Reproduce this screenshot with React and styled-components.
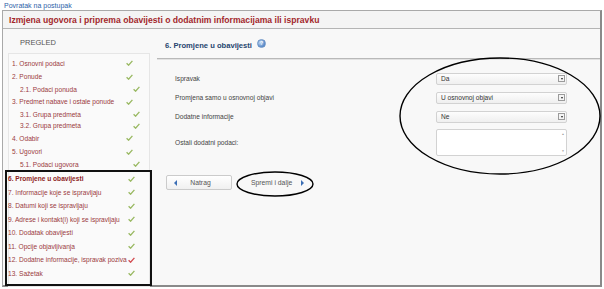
import React from "react";
import styled, { createGlobalStyle } from "styled-components";

const GlobalStyle = createGlobalStyle`
  body {
    margin: 0;
    background: #fff;
    font-family: "Liberation Sans", Arial, sans-serif;
  }
`;

const Page = styled.div`
  position: relative;
  width: 604px;
  height: 289px;
  padding: 2px 2px 0 2px;
  box-sizing: border-box;
`;

const BackLink = styled.a`
  display: block;
  height: 8px;
  padding-left: 2px;
  font-size: 7px;
  line-height: 8px;
  color: #2d5fa8;
  text-decoration: none;
`;

const Frame = styled.div`
  width: 600px;
  height: 277px;
  box-sizing: border-box;
  border: 1px solid #a9a9a9;
  border-right: 2px solid #8a8a8a;
  border-bottom: 2px solid #8a8a8a;
  background: #f8f8f8;
  display: flex;
  flex-direction: column;
`;

const TitleBar = styled.div`
  height: 17px;
  flex: none;
  border-bottom: 1px solid #b4b4b4;
  background: #f4f4f4;
  padding-left: 6px;
  display: flex;
  align-items: center;
`;

const Title = styled.h1`
  margin: 0;
  font-size: 8.6px;
  font-weight: bold;
  color: #a3282c;
`;

const Body = styled.div`
  flex: 1;
  display: flex;
`;

const Sidebar = styled.div`
  width: 154px;
  flex: none;
  padding-left: 5px;
  box-sizing: border-box;
`;

const SidebarTitle = styled.div`
  height: 24px;
  padding-left: 12px;
  font-size: 7.5px;
  color: #555;
  display: flex;
  align-items: center;
  padding-top: 3px;
  box-sizing: border-box;
`;

const NavBox = styled.div`
  width: 142px;
  border: 1px solid #e6e6e6;
  background: #fafafa;
  padding-top: 2.5px;
  box-sizing: border-box;
`;

const NavItem = styled.div`
  display: flex;
  align-items: center;
  justify-content: space-between;
  height: ${(p) => (p.$sub ? "11.5px" : "13.5px")};
  padding-left: ${(p) => (p.$sub ? "11px" : "3px")};
  padding-right: ${(p) => (p.$sub ? "9px" : "16px")};
  font-size: 6.6px;
  color: ${(p) => (p.$active ? "#8e1f24" : "#9a3a3e")};
  font-weight: ${(p) => (p.$active ? "bold" : "normal")};
`;

const Highlight = styled.div`
  margin: 0 -3px 0 -4px;
  border: 2px solid #111;
  padding-bottom: 3.5px;

  ${NavItem} {
    padding-left: 1px;
    padding-right: 15px;
  }
`;

const Main = styled.div`
  flex: 1;
  display: flex;
  flex-direction: column;
`;

const SectionHeader = styled.div`
  height: 30px;
  flex: none;
  box-sizing: border-box;
  border-bottom: 1px solid #b9b9b9;
  box-shadow: 0 1px 0 #e2e2e2;
  padding-left: 8px;
  padding-top: 4px;
  display: flex;
  align-items: center;
  gap: 5px;
`;

const SectionTitle = styled.h2`
  margin: 0;
  font-size: 7.6px;
  font-weight: bold;
  color: #27466f;
`;

const HelpIcon = styled.span`
  width: 7px;
  height: 7px;
  border-radius: 50%;
  background: radial-gradient(circle at 35% 35%, #c7dcf5, #5a8bc8 70%);
  border: 1px solid #6b93c6;
  color: #fff;
  font-size: 5px;
  line-height: 7px;
  text-align: center;
  font-weight: bold;
  margin-top: -4px;
`;

const Form = styled.div`
  display: grid;
  grid-template-columns: 261px 131px;
  grid-template-rows: 19px 19px 19px auto;
  padding: 10px 0 0 18px;
  align-items: center;
`;

const Label = styled.div`
  font-size: 6.6px;
  color: #444;
  margin-top: ${(p) => (p.$offset ? `${p.$offset}px` : 0)};
`;

const Select = styled.div`
  height: 12px;
  box-sizing: border-box;
  border: 1px solid #d2d2d2;
  background: linear-gradient(#fdfdfd, #efefef);
  border-radius: 2px;
  display: flex;
  align-items: center;
  justify-content: space-between;
  padding: 0 1px 0 4px;
  font-size: 6.6px;
  color: #333;
`;

const ArrowBox = styled.span`
  width: 7px;
  height: 7px;
  box-sizing: border-box;
  border: 1px solid #9b9b9b;
  background: #f4f4f4;
  display: flex;
  align-items: center;
  justify-content: center;

  &::after {
    content: "";
    border-left: 1.5px solid transparent;
    border-right: 1.5px solid transparent;
    border-top: 2px solid #222;
  }
`;

const TextArea = styled.div`
  height: 27px;
  margin-top: 3px;
  box-sizing: border-box;
  border: 1px solid #d2d2d2;
  background: #fff;
  border-radius: 2px;
  display: flex;
  justify-content: flex-end;
`;

const ScrollBar = styled.div`
  width: 6px;
  display: flex;
  flex-direction: column;
  justify-content: space-between;
  align-items: center;
  padding: 2px 0;
  font-size: 3px;
  color: #999;
`;

const Buttons = styled.div`
  display: flex;
  gap: 8px;
  padding: 19px 0 0 9px;
`;

const Button = styled.button`
  width: ${(p) => p.$width}px;
  height: 15px;
  box-sizing: border-box;
  border: 1px solid ${(p) => (p.$plain ? "transparent" : "#cbcbcb")};
  background: ${(p) => (p.$plain ? "transparent" : "linear-gradient(#fff, #f0f0f0)")};
  border-radius: 2px;
  display: flex;
  align-items: center;
  justify-content: ${(p) => (p.$plain ? "flex-start" : "space-between")};
  gap: 9px;
  padding: ${(p) => (p.$plain ? "0 0 0 10px" : "0 7px")};
  font-family: "Liberation Sans", Arial, sans-serif;
  font-size: 6.8px;
  color: #555;
`;

const Arrow = styled.span`
  width: 0;
  height: 0;
  border-top: 3px solid transparent;
  border-bottom: 3px solid transparent;
  ${(p) =>
    p.$dir === "left"
      ? "border-right: 3.5px solid #3c6fb5;"
      : "border-left: 3.5px solid #3c6fb5;"}
`;

const Annotations = styled.svg`
  position: absolute;
  top: 0;
  left: 0;
  pointer-events: none;
`;

const Check = ({ red }) => (
  <svg width="7" height="6" viewBox="0 0 7 6">
    <path
      d="M0.6 3.2 L2.6 5.2 L6.4 0.8"
      fill="none"
      stroke={red ? "#d2494e" : "#98b860"}
      strokeWidth="1.3"
    />
  </svg>
);

const topItems = [
  { label: "1. Osnovni podaci" },
  { label: "2. Ponude" },
  { label: "2.1. Podaci ponuda", sub: true },
  { label: "3. Predmet nabave i ostale ponude" },
  { label: "3.1. Grupa predmeta", sub: true },
  { label: "3.2. Grupa predmeta", sub: true },
  { label: "4. Odabir" },
  { label: "5. Ugovori" },
  { label: "5.1. Podaci ugovora", sub: true },
];

const markedItems = [
  { label: "6. Promjene u obavijesti", active: true },
  { label: "7. Informacije koje se ispravljaju" },
  { label: "8. Datumi koji se ispravljaju" },
  { label: "9. Adrese i kontakt(i) koji se ispravljaju" },
  { label: "10. Dodatak obavijesti" },
  { label: "11. Opcije objavljivanja" },
  { label: "12. Dodatne informacije, ispravak poziva", red: true },
  { label: "13. Sažetak" },
];

const fields = [
  { label: "Ispravak", value: "Da" },
  { label: "Promjena samo u osnovnoj objavi", value: "U osnovnoj objavi" },
  { label: "Dodatne informacije", value: "Ne" },
];

function renderItem(item) {
  return (
    <NavItem key={item.label} $sub={item.sub} $active={item.active}>
      <span>{item.label}</span>
      <Check red={item.red} />
    </NavItem>
  );
}

export default function App() {
  return (
    <Page>
      <GlobalStyle />
      <BackLink href="#">Povratak na postupak</BackLink>
      <Frame>
        <TitleBar>
          <Title>Izmjena ugovora i priprema obavijesti o dodatnim informacijama ili ispravku</Title>
        </TitleBar>
        <Body>
          <Sidebar>
            <SidebarTitle>PREGLED</SidebarTitle>
            <NavBox>
              {topItems.map(renderItem)}
              <Highlight>{markedItems.map(renderItem)}</Highlight>
            </NavBox>
          </Sidebar>
          <Main>
            <SectionHeader>
              <SectionTitle>6. Promjene u obavijesti</SectionTitle>
              <HelpIcon>?</HelpIcon>
            </SectionHeader>
            <Form>
              {fields.map((f) => (
                <React.Fragment key={f.label}>
                  <Label>{f.label}</Label>
                  <Select>
                    <span>{f.value}</span>
                    <ArrowBox />
                  </Select>
                </React.Fragment>
              ))}
              <Label $offset={3}>Ostali dodatni podaci:</Label>
              <TextArea>
                <ScrollBar>
                  <span>▲</span>
                  <span>▼</span>
                </ScrollBar>
              </TextArea>
            </Form>
            <Buttons>
              <Button $width={66}>
                <Arrow $dir="left" />
                <span>Natrag</span>
                <span />
              </Button>
              <Button $width={70} $plain>
                <span>Spremi i dalje</span>
                <Arrow $dir="right" />
              </Button>
            </Buttons>
          </Main>
        </Body>
      </Frame>
      <Annotations width="604" height="289" viewBox="0 0 604 289">
        <ellipse cx="500" cy="116" rx="100" ry="58" fill="none" stroke="#000" strokeWidth="1.4" />
        <ellipse cx="275" cy="184" rx="38" ry="12" fill="none" stroke="#000" strokeWidth="1.4" />
      </Annotations>
    </Page>
  );
}
